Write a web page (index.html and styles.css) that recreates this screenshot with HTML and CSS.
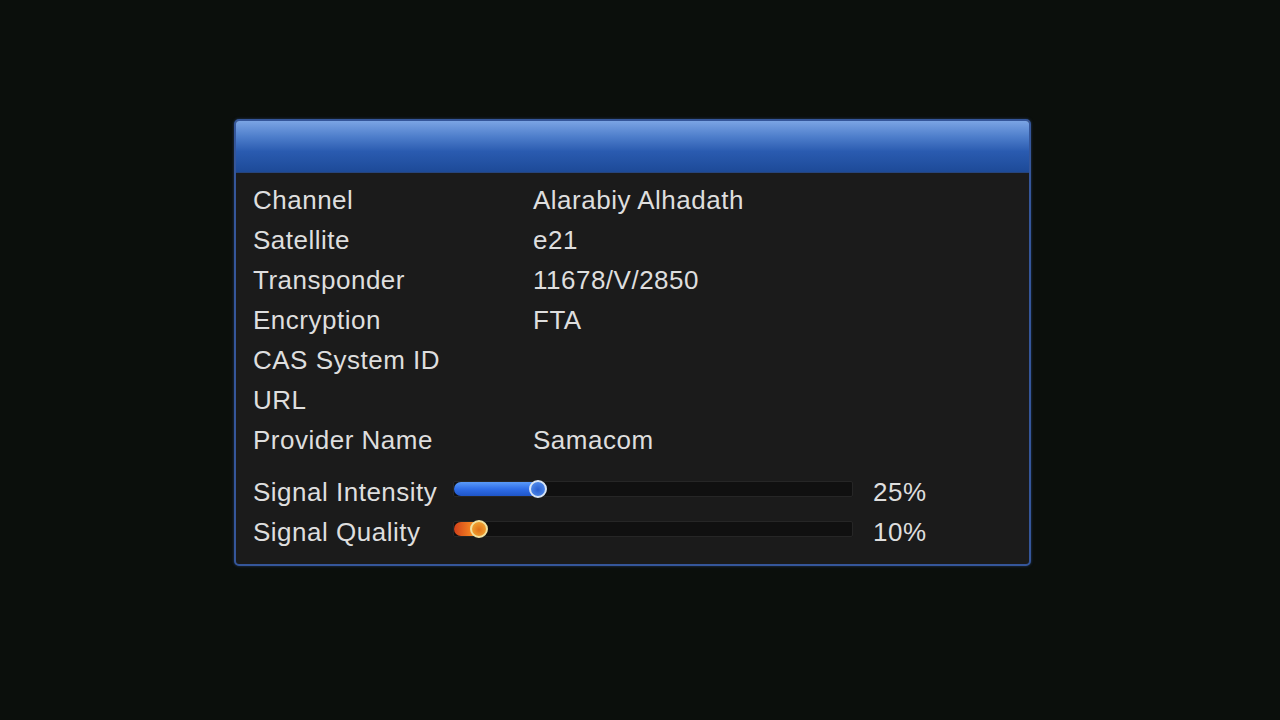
FILE: index.html
```html
<!DOCTYPE html>
<html>
<head>
    <meta charset="UTF-8">
    <title>Channel Info</title>
    <link rel="stylesheet" href="styles.css">
</head>
<body>
    <div class="panel">
        <div class="panel-header"></div>
        <div class="panel-body">
            <div class="info-row"><span class="label">Channel</span><span class="value">Alarabiy Alhadath</span></div>
            <div class="info-row"><span class="label">Satellite</span><span class="value">e21</span></div>
            <div class="info-row"><span class="label">Transponder</span><span class="value">11678/V/2850</span></div>
            <div class="info-row"><span class="label">Encryption</span><span class="value">FTA</span></div>
            <div class="info-row"><span class="label">CAS System ID</span><span class="value"></span></div>
            <div class="info-row"><span class="label">URL</span><span class="value"></span></div>
            <div class="info-row"><span class="label">Provider Name</span><span class="value">Samacom</span></div>

            <div class="signals">
                <div class="signal-row">
                    <span class="signal-label">Signal Intensity</span>
                    <div class="bar">
                        <div class="fill fill-blue" style="width: 21.2%"><span class="knob knob-blue"></span></div>
                    </div>
                    <span class="percent">25%</span>
                </div>
                <div class="signal-row">
                    <span class="signal-label">Signal Quality</span>
                    <div class="bar">
                        <div class="fill fill-orange" style="width: 6.2%"><span class="knob knob-orange"></span></div>
                    </div>
                    <span class="percent">10%</span>
                </div>
            </div>
        </div>
    </div>
</body>
</html>
```

FILE: styles.css
```css
body {
    margin: 0;
    width: 1280px;
    height: 720px;
    background-color: #0b0f0c;
    font-family: "Liberation Sans", Arial, sans-serif;
    overflow: hidden;
}

.panel {
    margin: 119px 0 0 234px;
    width: 793px;
    height: 443px;
    border: 2px solid #35569a;
    border-radius: 5px;
    background-color: #1b1b1b;
    box-shadow: 0 0 3px rgba(60, 100, 180, 0.5);
    overflow: hidden;
    display: flex;
    flex-direction: column;
}

.panel-header {
    height: 51px;
    background: linear-gradient(to bottom, #7ba4e4 0%, #4f7fcc 30%, #2a5bb0 60%, #1d4a98 100%);
    border-bottom: 1px solid #26447c;
}

.panel-body {
    padding: 7px 0 0 17px;
}

.info-row {
    display: flex;
    height: 40px;
    line-height: 40px;
    font-size: 26px;
    color: #dedede;
    letter-spacing: 0.5px;
}

.label {
    width: 280px;
}

.signals {
    margin-top: 12px;
}

.signal-row {
    display: flex;
    align-items: center;
    height: 40px;
    font-size: 26px;
    color: #dedede;
    letter-spacing: 0.5px;
}

.signal-label {
    width: 200px;
}

.bar {
    position: relative;
    width: 398px;
    height: 14px;
    margin-bottom: 6px;
    background-color: #101010;
    border: 1px solid #262626;
    border-radius: 2px;
}

.fill {
    position: relative;
    height: 100%;
    border-radius: 7px 0 0 7px;
}

.fill-blue {
    background: linear-gradient(to bottom, #5a9af8 0%, #2f6ee8 50%, #1f55c8 100%);
}

.fill-orange {
    background: linear-gradient(to right, #d0401a 0%, #f07a20 60%, #f5b030 100%);
}

.knob {
    position: absolute;
    right: -9px;
    top: -2px;
    width: 14px;
    height: 14px;
    border-radius: 50%;
    border: 2px solid #d8e4f4;
}

.knob-blue {
    background: radial-gradient(circle at 50% 55%, #2a5fd0 0%, #4c86e8 70%, #a9c4ee 100%);
}

.knob-orange {
    border-color: #f2e2a0;
    background: radial-gradient(circle at 50% 55%, #e07018 0%, #f0a030 70%, #f8d890 100%);
}

.percent {
    margin-left: 20px;
}
```
